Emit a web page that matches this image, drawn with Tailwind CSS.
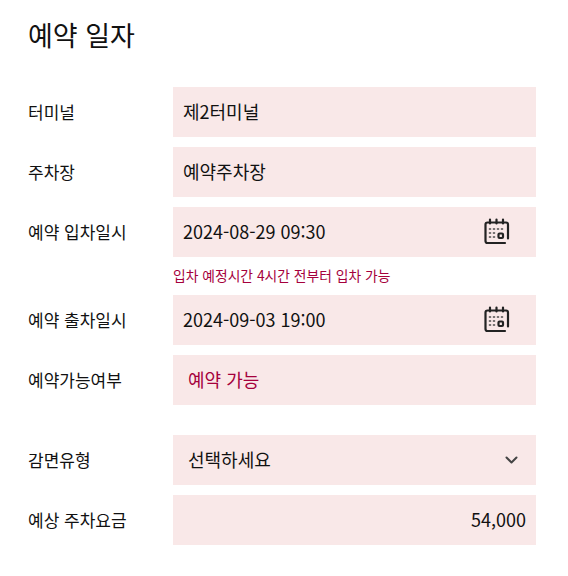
<!DOCTYPE html>
<html lang="ko">
<head>
  <meta charset="UTF-8" />
  <title>예약 일자</title>
  <script src="https://cdn.jsdelivr.net/npm/@tailwindcss/browser@4"></script>
</head>
<body class="bg-white text-[#111] font-['Noto_Sans_CJK_KR','Noto_Sans',sans-serif]">
  <div class="w-[568px] h-[576px] overflow-hidden pl-7 pr-8 pt-[14px]">
    <h2 class="text-[27px] leading-[42px] font-normal mb-[31px]">예약 일자</h2>

    <div class="flex flex-col gap-2.5">
      <div class="flex items-center">
        <span class="w-[145px] text-[17px]">터미널</span>
        <div class="w-[363px] h-[50px] bg-[#f9e8e8] flex items-center px-2.5 pb-0.5 text-lg">제2터미널</div>
      </div>
      <div class="flex items-center">
        <span class="w-[145px] text-[17px]">주차장</span>
        <div class="w-[363px] h-[50px] bg-[#f9e8e8] flex items-center px-2.5 pb-0.5 text-lg">예약주차장</div>
      </div>
      <div>
        <div class="flex items-center">
          <span class="w-[145px] text-[17px]">예약 입차일시</span>
          <div class="w-[363px] h-[50px] bg-[#f9e8e8] flex items-center justify-between pl-2.5 pr-[26px] text-lg">
            <span class="pb-0.5">2024-08-29 09:30</span>
            <svg class="w-[26px] h-[27px] mb-px" viewBox="0 0 26 27" fill="none" stroke="#222" stroke-width="2.200" stroke-linecap="round">
              <path d="M24 20.500V6.500a2 2 0 0 0-2-2H3.500a2 2 0 0 0-2 2v16.500a2 2 0 0 0 2 2h17.500" />
              <path d="M6 1.500v4M12.500 1.500v4M19 1.500v4" />
              <path d="M5.500 11h1M9.500 11h1M13.500 11h1M17.500 11h1M5.500 15h1M9.500 15h1M5.500 19h1M9.500 19h1" stroke="#444" stroke-width="1.600" />
              <rect x="14.500" y="15.500" width="4.500" height="4.500" rx="1" />
            </svg>
          </div>
        </div>
        <p class="ml-[145px] h-[38px] leading-9 text-[13.800px] text-[#a5003c]">입차 예정시간 4시간 전부터 입차 가능</p>
        <div class="flex items-center">
          <span class="w-[145px] text-[17px]">예약 출차일시</span>
          <div class="w-[363px] h-[50px] bg-[#f9e8e8] flex items-center justify-between pl-2.5 pr-[26px] text-lg">
            <span class="pb-0.5">2024-09-03 19:00</span>
            <svg class="w-[26px] h-[27px] mb-px" viewBox="0 0 26 27" fill="none" stroke="#222" stroke-width="2.200" stroke-linecap="round">
              <path d="M24 20.500V6.500a2 2 0 0 0-2-2H3.500a2 2 0 0 0-2 2v16.500a2 2 0 0 0 2 2h17.500" />
              <path d="M6 1.500v4M12.500 1.500v4M19 1.500v4" />
              <path d="M5.500 11h1M9.500 11h1M13.500 11h1M17.500 11h1M5.500 15h1M9.500 15h1M5.500 19h1M9.500 19h1" stroke="#444" stroke-width="1.600" />
              <rect x="14.500" y="15.500" width="4.500" height="4.500" rx="1" />
            </svg>
          </div>
        </div>
      </div>
      <div class="flex items-center">
        <span class="w-[145px] text-[17px]">예약가능여부</span>
        <div class="w-[363px] h-[50px] bg-[#f9e8e8] flex items-center px-[15px] pb-0.5 text-lg text-[#a5003c]">예약 가능</div>
      </div>
      <div class="flex items-center mt-5">
        <span class="w-[145px] text-[17px]">감면유형</span>
        <div class="w-[363px] h-[50px] bg-[#f9e8e8] flex items-center justify-between pl-[15px] pr-[17px] text-lg">
          <span class="pb-0.5">선택하세요</span>
          <svg class="w-3.5 h-3.5" viewBox="0 0 14 14" fill="none" stroke="#444" stroke-width="2" stroke-linecap="round" stroke-linejoin="round">
            <path d="M1.500 4.500l5 5 5-5" />
          </svg>
        </div>
      </div>
      <div class="flex items-center">
        <span class="w-[145px] text-[17px]">예상 주차요금</span>
        <div class="w-[363px] h-[50px] bg-[#f9e8e8] flex items-center justify-end px-2.5 pb-0.5 text-lg">54,000</div>
      </div>
    </div>
  </div>
</body>
</html>
